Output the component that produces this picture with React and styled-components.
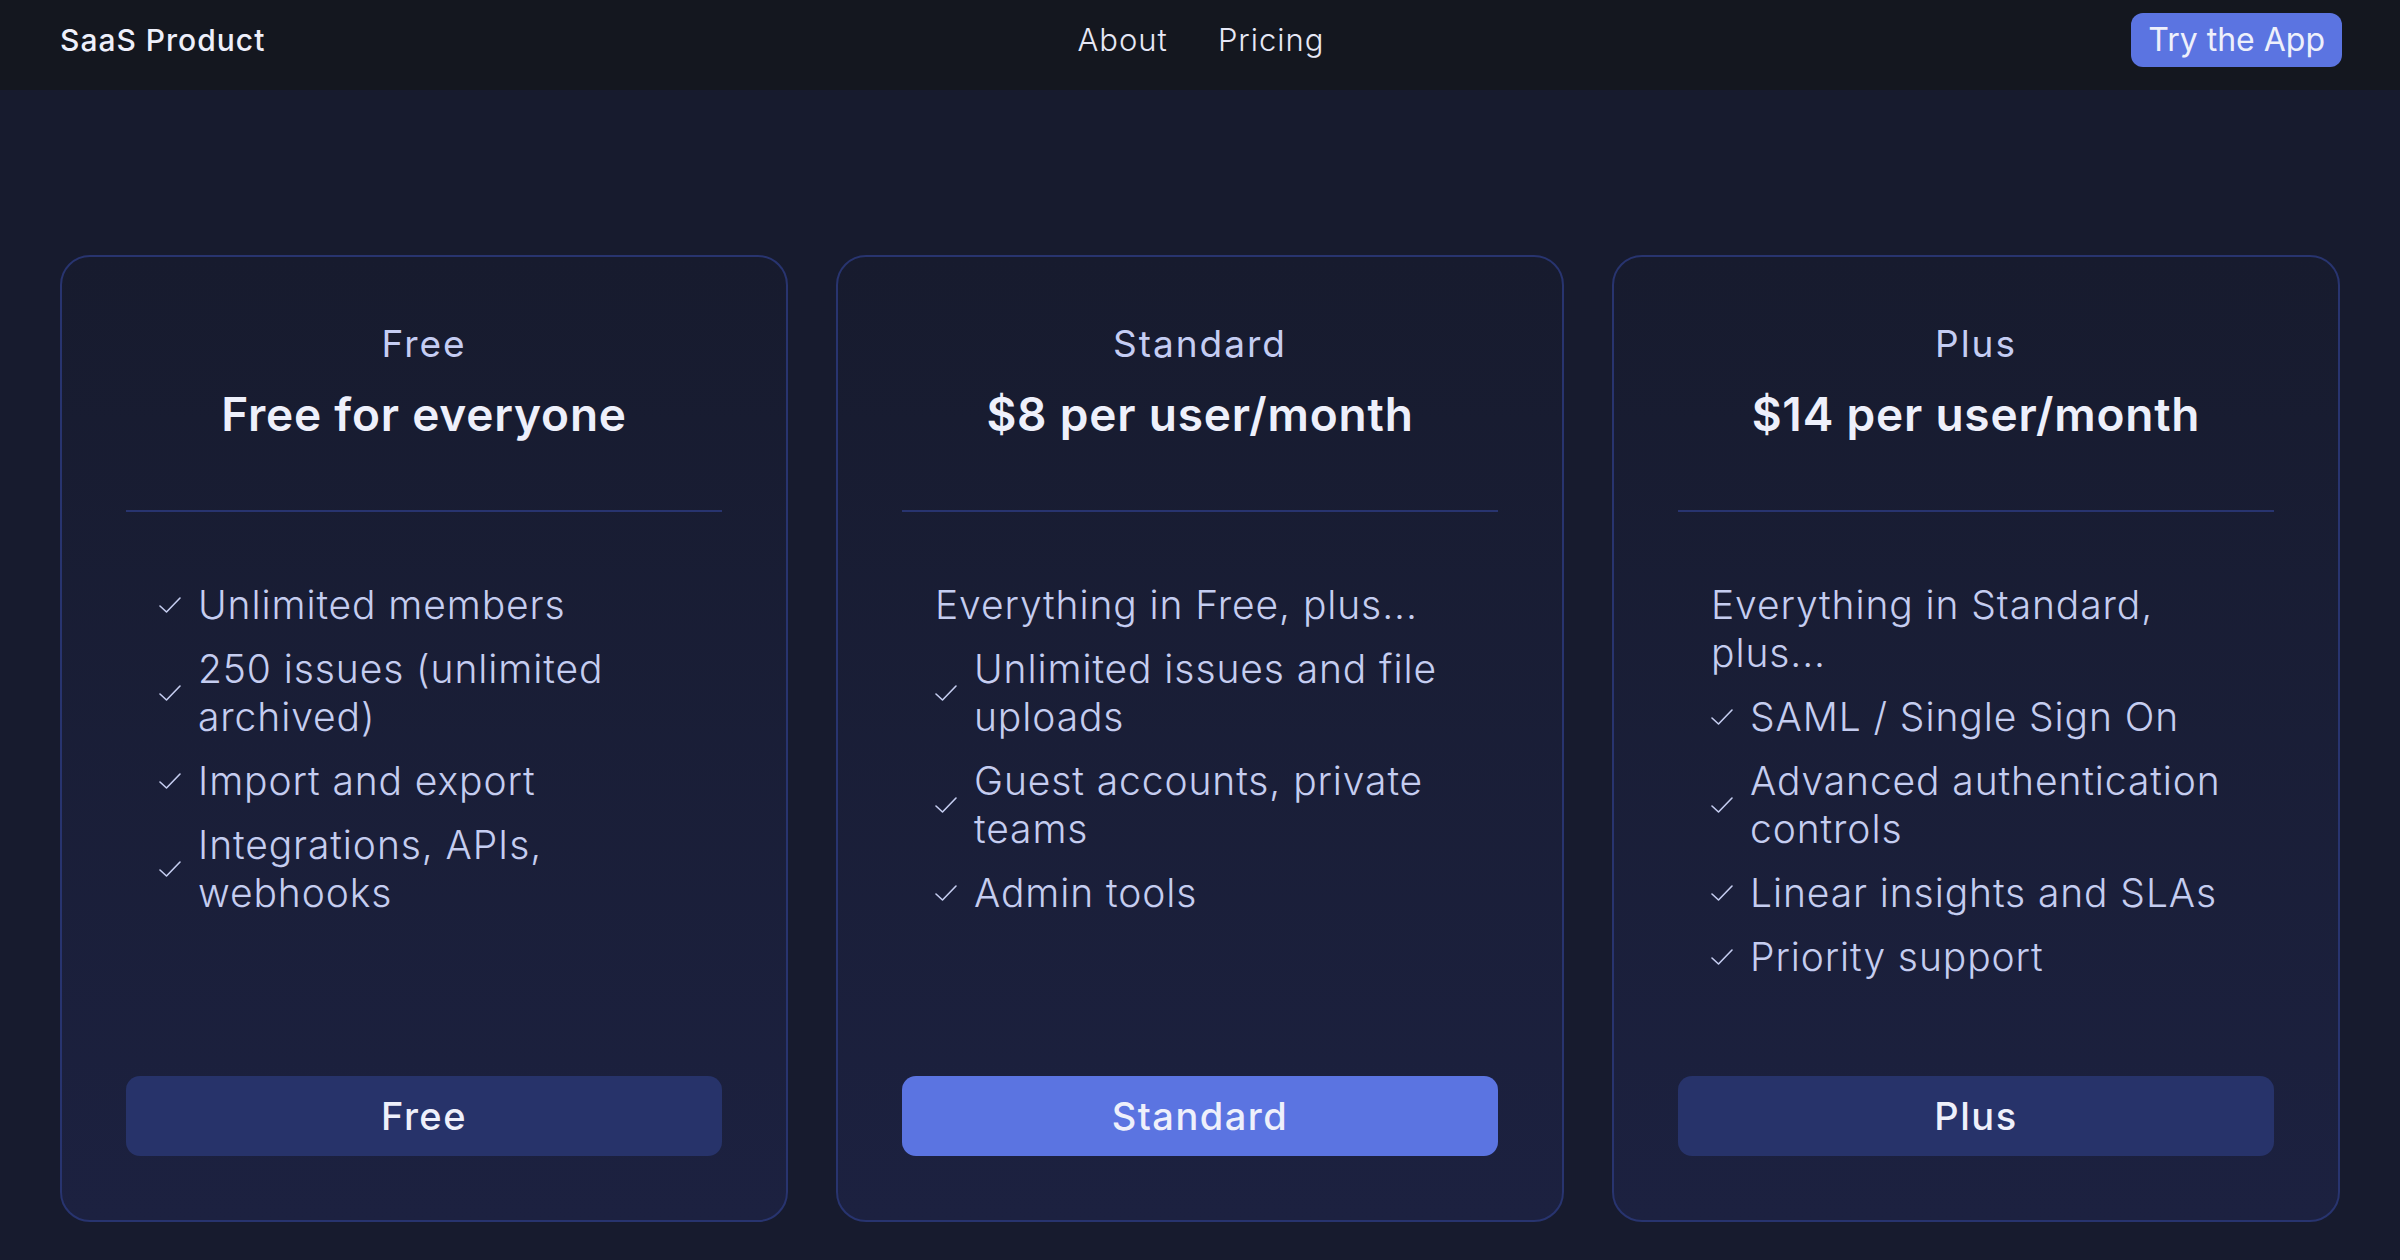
import React from "react";
import styled, { createGlobalStyle } from "styled-components";

const plans = [
  {
    name: "Free",
    price: "Free for everyone",
    features: [
      "Unlimited members",
      "250 issues (unlimited archived)",
      "Import and export",
      "Integrations, APIs, webhooks",
    ],
  },
  {
    name: "Standard",
    price: "$8 per user/month",
    intro: "Everything in Free, plus...",
    features: [
      "Unlimited issues and file uploads",
      "Guest accounts, private teams",
      "Admin tools",
    ],
    primary: true,
  },
  {
    name: "Plus",
    price: "$14 per user/month",
    intro: "Everything in Standard, plus...",
    features: [
      "SAML / Single Sign On",
      "Advanced authentication controls",
      "Linear insights and SLAs",
      "Priority support",
    ],
  },
];

function Check() {
  return (
    <CheckIcon viewBox="0 0 22 16" fill="none">
      <polyline
        points="1,9 7.5,15 21,1"
        stroke="currentColor"
        strokeWidth="1.6"
        strokeLinecap="round"
        strokeLinejoin="round"
      />
    </CheckIcon>
  );
}

export default function App() {
  return (
    <>
      <GlobalStyle />
      <Nav>
        <Brand>SaaS Product</Brand>
        <Links>
          <NavLink>About</NavLink>
          <NavLink>Pricing</NavLink>
        </Links>
        <TryButton>Try the App</TryButton>
      </Nav>

      <Main>
        <Grid>
          {plans.map((plan) => (
            <Card key={plan.name}>
              <Header>
                <PlanName>{plan.name}</PlanName>
                <Price>{plan.price}</Price>
              </Header>

              <Features>
                {plan.intro && <Intro>{plan.intro}</Intro>}
                {plan.features.map((f) => (
                  <Feature key={f}>
                    <Check />
                    <span>{f}</span>
                  </Feature>
                ))}
              </Features>

              <PlanButton $primary={plan.primary}>{plan.name}</PlanButton>
            </Card>
          ))}
        </Grid>
      </Main>
    </>
  );
}

/* ----------------------------- STYLED COMPONENTS ----------------------------- */

const GlobalStyle = createGlobalStyle`
  html, body {
    margin: 0;
    padding: 0;
    background: #171b2e;
  }
  body {
    font-family: Inter, "Noto Sans", sans-serif;
    color: #eef0fb;
  }
  * {
    box-sizing: border-box;
  }
`;

const Nav = styled.header`
  height: 90px;
  background: #14171f;
  display: grid;
  grid-template-columns: 1fr auto 1fr;
  align-items: center;
  padding: 0 58px 11px 60px;
`;

const Brand = styled.div`
  font-size: 30px;
  font-weight: 500;
  letter-spacing: 1px;
  color: #eef0fb;
`;

const Links = styled.nav`
  display: flex;
  gap: 50px;
`;

const NavLink = styled.a`
  font-size: 31px;
  font-weight: 300;
  letter-spacing: 1px;
  color: #e6e8f6;
  cursor: pointer;
`;

const TryButton = styled.button`
  justify-self: end;
  height: 54px;
  padding: 0 17px;
  border: none;
  border-radius: 12px;
  background: #5b74e1;
  color: #eef0fb;
  font-family: inherit;
  font-size: 32px;
  font-weight: 400;
  cursor: pointer;
`;

const Main = styled.main`
  padding: 165px 60px 38px;
`;

const Grid = styled.div`
  display: grid;
  grid-template-columns: repeat(3, 1fr);
  gap: 48px;
`;

const Card = styled.section`
  display: flex;
  flex-direction: column;
  height: 967px;
  padding: 64px;
  border: 2px solid #28346f;
  border-radius: 30px;
  background: linear-gradient(180deg, #171b2e 0%, #1c2140 100%);
`;

const Header = styled.div`
  display: flex;
  flex-direction: column;
  align-items: center;
  gap: 20px;
  padding: 1px 0 68px;
  border-bottom: 2px solid #28346f;
`;

const PlanName = styled.h3`
  margin: 0;
  font-size: 37px;
  line-height: 44px;
  font-weight: 400;
  letter-spacing: 2px;
  color: #c5cdf3;
`;

const Price = styled.h2`
  margin: 0;
  font-size: 46px;
  line-height: 56px;
  font-weight: 600;
  letter-spacing: 0.8px;
  color: #eef0fb;
`;

const Features = styled.ul`
  list-style: none;
  margin: 69px 0 0;
  padding: 0 32px 0 33px;
  display: flex;
  flex-direction: column;
  gap: 16px;
`;

const Intro = styled.li`
  font-size: 39px;
  line-height: 48px;
  font-weight: 300;
  letter-spacing: 0.9px;
  color: #c5cdf0;
`;

const Feature = styled.li`
  display: flex;
  align-items: center;
  gap: 17px;
  font-size: 39px;
  line-height: 48px;
  font-weight: 300;
  letter-spacing: 0.9px;
  color: #c5cdf0;
`;

const CheckIcon = styled.svg`
  flex: none;
  width: 22px;
  height: 16px;
`;

const PlanButton = styled.button`
  margin-top: auto;
  height: 80px;
  border: none;
  border-radius: 14px;
  background: ${(p) => (p.$primary ? "#5b74e1" : "#27336a")};
  color: #eef0fb;
  font-family: inherit;
  font-size: 38px;
  font-weight: 500;
  letter-spacing: 1.5px;
  cursor: pointer;
`;
